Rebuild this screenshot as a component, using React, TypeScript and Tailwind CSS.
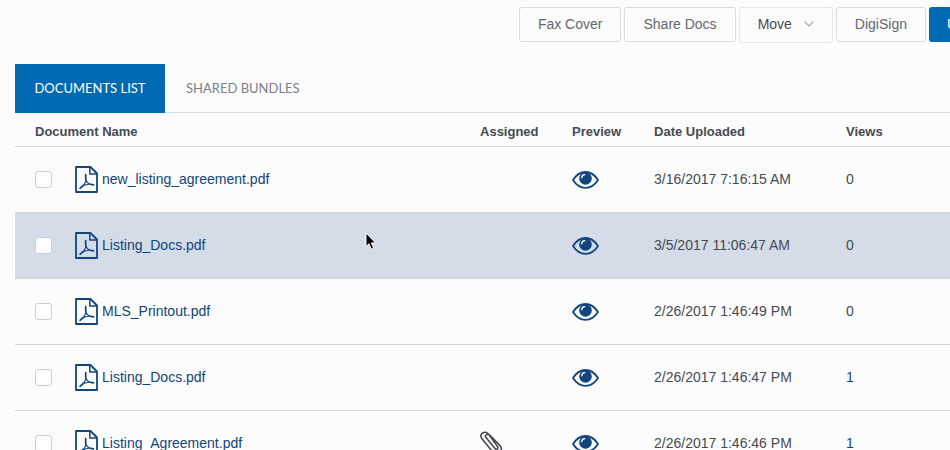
import React, { useState } from "react";

type Doc = {
    id: number;
    name: string;
    uploaded: string;
    views: number;
    assigned?: boolean;
};

const docs: Doc[] = [
    { id: 1, name: "new_listing_agreement.pdf", uploaded: "3/16/2017 7:16:15 AM", views: 0 },
    { id: 2, name: "Listing_Docs.pdf", uploaded: "3/5/2017 11:06:47 AM", views: 0 },
    { id: 3, name: "MLS_Printout.pdf", uploaded: "2/26/2017 1:46:49 PM", views: 0 },
    { id: 4, name: "Listing_Docs.pdf", uploaded: "2/26/2017 1:46:47 PM", views: 1 },
    { id: 5, name: "Listing_Agreement.pdf", uploaded: "2/26/2017 1:46:46 PM", views: 1, assigned: true },
];

function PdfIcon() {
    return (
        <svg width="23" height="27" viewBox="0 0 23 27" fill="none" stroke="#11457f" strokeLinejoin="round" className="shrink-0">
            <path d="M1 1h14.5L22 7.5V26H1z" strokeWidth="1.8" />
            <path d="M14.8 1.5V8H21.5" strokeWidth="1.5" />
            <path d="M11 15l-2.500 4.500M11 15l3 3M8.500 19.500l5.500-1.500" strokeWidth="1.100" />
            <path d="M10.700 8.500c-.1 2.600 0 4.700.3 6.500M8.300 19.500l-3.300 2.800M14 18l4.500.8" strokeWidth="1.700" strokeLinecap="round" />
        </svg>
    );
}

function EyeIcon() {
    return (
        <svg width="27" height="20" viewBox="0 -2 27 20" fill="none" className="block">
            <path d="M1 9C4.200 4 8.500 1 13.500 1S22.800 4 26 9C22.800 14 18.500 16.800 13.500 16.800S4.200 14 1 9z" stroke="#11457f" strokeWidth="1.8" strokeLinejoin="round" />
            <circle cx="13.500" cy="7.400" r="6.300" fill="#11457f" />
            <path d="M9.800 6.800C9.800 5 11 3.800 12.800 3.700" stroke="#fff" strokeWidth="1.300" strokeLinecap="round" />
        </svg>
    );
}

function ClipIcon() {
    return (
        <svg width="22" height="24" viewBox="0 0 22 24" fill="none" stroke="#454a54" strokeWidth="1.600" strokeLinecap="round" className="block">
            <path d="M6 6.500l8.800 10.800c1.800 2.100 4.300.1 2.600-2L8.600 3.200C5.200-1-1.600 2.700 1.800 7.600l10.700 13.100c4.400 4.600 11.400-.4 7.600-5.900L10 4.200C8 2 3.800 4.300 6 6.500" />
        </svg>
    );
}

const btn = "h-[35px] shrink-0 rounded-[3px] border border-[#d8dbe2] px-[18px] pb-0.5 text-sm text-[#626771]";

export default function App() {
    const [tab, setTab] = useState("documents");
    const [selected, setSelected] = useState<number[]>([]);

    function toggle(id: number) {
        setSelected(selected.includes(id) ? selected.filter((s) => s !== id) : [...selected, id]);
    }

    const activeTab = "bg-[#0069b4] text-white";
    const idleTab = "text-[#7b808a]";

    return (
        <div className="relative h-screen overflow-hidden bg-[#fcfcfd] pl-[15px] font-['Liberation_Sans',Arial,sans-serif] text-[#454a54]">
            {/* Toolbar, runs past the right edge */}
            <div className="-mr-[72px] flex items-start justify-end gap-[3px] pt-[7px]">
                <button className={btn}>Fax Cover</button>
                <button className={btn}>Share Docs</button>
                <button className="flex h-9 shrink-0 items-center gap-3 rounded-[3px] border border-[#e3e6eb] px-[18px] pb-0.5 text-sm text-[#454a54]">
                    Move
                    <svg width="10" height="6" viewBox="0 0 10 6" fill="none" stroke="#9aa5b5" strokeWidth="1.2">
                        <path d="M.6.600L5 5l4.400-4.400" />
                    </svg>
                </button>
                <button className={btn}>DigiSign</button>
                <button className="h-[35px] w-[93px] shrink-0 rounded-[3px] bg-[#0069b4] px-[18px] pb-0.5 text-left text-sm text-white">Upload</button>
            </div>

            <div role="tablist" className="mt-[21px] flex h-[49px] border-b border-[#d5d9e0] font-['Lato',sans-serif] text-[13px]">
                <button role="tab" aria-selected={tab === "documents"} onClick={() => setTab("documents")} className={`-mb-px w-[150px] ${tab === "documents" ? activeTab : idleTab}`}>
                    DOCUMENTS LIST
                </button>
                <button role="tab" aria-selected={tab === "bundles"} onClick={() => setTab("bundles")} className={`-mb-px px-[21px] ${tab === "bundles" ? activeTab : idleTab}`}>
                    SHARED BUNDLES
                </button>
            </div>

            <table className="w-full table-fixed text-left text-sm">
                <colgroup>
                    <col className="w-[60px]" />
                    <col className="w-[405px]" />
                    <col className="w-[92px]" />
                    <col className="w-[82px]" />
                    <col className="w-[192px]" />
                    <col />
                </colgroup>
                <thead>
                    <tr className="h-[33px] border-b border-[#cfd4dc] text-[13px]">
                        <th colSpan={2} className="pl-5 pt-1.5">Document Name</th>
                        <th className="pt-1.5">Assigned</th>
                        <th className="pt-1.5">Preview</th>
                        <th className="pt-1.5">Date Uploaded</th>
                        <th className="pt-1.5">Views</th>
                    </tr>
                </thead>
                <tbody>
                    {docs.map((doc) => (
                        <tr key={doc.id} className={`h-[66px] border-b border-[#cfd4dc] ${doc.id === 2 ? "bg-[#d3dce7]" : ""}`}>
                            <td className="pl-5">
                                <input
                                    type="checkbox"
                                    aria-label={`Select ${doc.name}`}
                                    checked={selected.includes(doc.id)}
                                    onChange={() => toggle(doc.id)}
                                    className="block size-[17px] appearance-none rounded-[3px] border border-[#c5cfdd] bg-[#fdfdfe] checked:bg-[#0069b4]"
                                />
                            </td>
                            <td>
                                <a href="#" className="flex items-center gap-1 text-[#11457f]">
                                    <PdfIcon />
                                    {doc.name}
                                </a>
                            </td>
                            <td>{doc.assigned && <ClipIcon />}</td>
                            <td>
                                <button aria-label={`Preview ${doc.name}`} className="block">
                                    <EyeIcon />
                                </button>
                            </td>
                            <td>{doc.uploaded}</td>
                            <td>{doc.views > 0 ? <a href="#" className="text-[#11457f]">{doc.views}</a> : doc.views}</td>
                        </tr>
                    ))}
                </tbody>
            </table>

            {/* Mouse pointer over the hovered row */}
            <svg width="12" height="19" viewBox="0 0 12 19" className="pointer-events-none absolute left-[365px] top-[232px]">
                <path d="M1 1v13.500l3-2.800 2.200 5.500 2.500-1-2.300-5.300h4.200z" fill="#000" stroke="#fff" strokeWidth="1" />
            </svg>
        </div>
    );
}
